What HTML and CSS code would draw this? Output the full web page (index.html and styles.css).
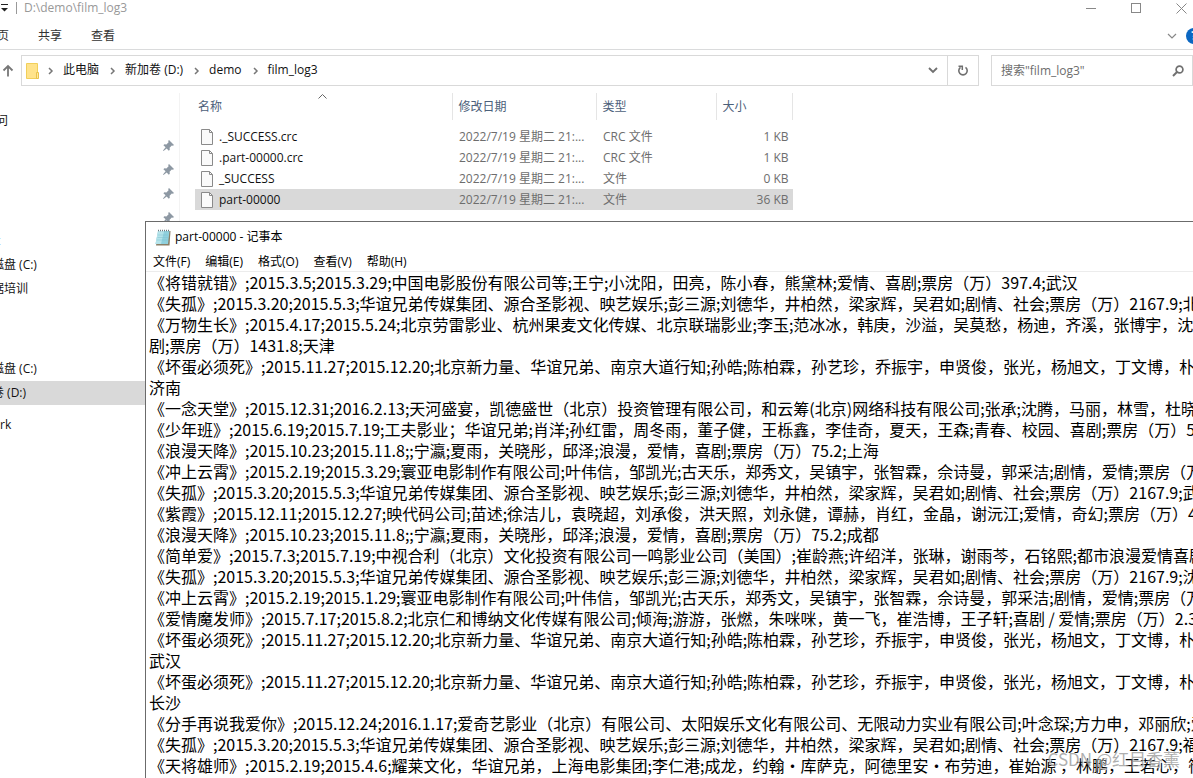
FILE: index.html
```html
<!DOCTYPE html>
<html lang="zh-CN">
<head>
<meta charset="utf-8">
<title>film_log3</title>
<link rel="stylesheet" href="styles.css">
</head>
<body>
<div class="desktop">
  <main class="explorer">
    <header class="titlebar">
      <svg class="quick" width="8" height="8" viewBox="0 0 8 8"><path d="M1 .5h7" stroke="#222"/><path d="M1 4h7L4.500 7.500z" fill="#222"/></svg>
      <span class="path">D:\demo\film_log3</span>
      <div class="window-buttons">
        <button aria-label="最小化"><svg width="10" height="10"><path d="M0 5.500h10" stroke="#888"/></svg></button>
        <button aria-label="最大化"><svg width="10" height="10"><rect x=".5" y=".5" width="9" height="9" fill="none" stroke="#888"/></svg></button>
        <button aria-label="关闭"><svg width="11" height="11"><path d="M.5.5l10 10M10.500.5l-10 10" stroke="#888"/></svg></button>
      </div>
    </header>
    <div class="ribbon">
      <button>页</button>
      <button>共享</button>
      <button>查看</button>
      <div class="ribbon-end">
        <button aria-label="展开功能区"><svg width="10" height="6"><path d="M1 1l4 4 4-4" fill="none" stroke="#888" stroke-width="1.200"/></svg></button>
        <button class="help" aria-label="帮助">?</button>
      </div>
    </div>
    <div class="address-row">
      <button class="up" aria-label="上移"><svg width="12" height="13"><path d="M6 12.500V2M1.500 6.500L6 2l4.500 4.500" fill="none" stroke="#777" stroke-width="1.800"/></svg></button>
      <div class="address">
        <svg class="folder" width="13" height="16"><path d="M.5.500h11v15H.5z" fill="#ffe38b" stroke="#f1cf5a"/><path d="M10.500 9.500h2v6h-2z" fill="#ffe99f" stroke="#e9c24b"/></svg>
        <svg class="sep" width="6" height="8"><path d="M1 1l3 3-3 3" fill="none" stroke="#777" stroke-width="1.500"/></svg>
        <a href="#">此电脑</a>
        <svg class="sep" width="6" height="8"><path d="M1 1l3 3-3 3" fill="none" stroke="#777" stroke-width="1.500"/></svg>
        <a href="#">新加卷 (D:)</a>
        <svg class="sep" width="6" height="8"><path d="M1 1l3 3-3 3" fill="none" stroke="#777" stroke-width="1.500"/></svg>
        <a href="#">demo</a>
        <svg class="sep" width="6" height="8"><path d="M1 1l3 3-3 3" fill="none" stroke="#777" stroke-width="1.500"/></svg>
        <a href="#">film_log3</a>
        <button class="history" aria-label="以前的位置"><svg width="10" height="7"><path d="M1 1l4 4 4-4" fill="none" stroke="#707070" stroke-width="1.800"/></svg></button>
        <button class="refresh" aria-label="刷新"><svg width="12" height="12"><path d="M8.500 2.300A4.200 4.200 0 1 1 3.500 2.300" fill="none" stroke="#707070" stroke-width="1.600"/><path d="M1.500 1.200h3.800V5" fill="none" stroke="#707070" stroke-width="1.500"/></svg></button>
      </div>
      <label class="search">
        <input type="text" aria-label="搜索" placeholder='搜索"film_log3"'>
        <svg width="12" height="12"><circle cx="7.500" cy="4.500" r="3.400" fill="none" stroke="#707070" stroke-width="1.700"/><path d="M5 7L1 11" stroke="#707070" stroke-width="2"/></svg>
      </label>
    </div>
    <div class="content">
      <nav class="sidebar">
        <a class="item root" href="#">问</a>
        <a class="item pinned" href="#" aria-label="固定项 1"><svg width="11" height="11" viewBox="0 0 11 11"><path d="M6 0l5 5-1 .8-1.200-.3-2.200 2.200.2 2-1 1L3.700 8.500.5 11 0 10.500l2.600-3.200L.4 5.200l1-1 2 .2 2.200-2.200L5.200 1z" fill="#8d98a3"/></svg></a>
        <a class="item pinned" href="#" aria-label="固定项 2"><svg width="11" height="11" viewBox="0 0 11 11"><path d="M6 0l5 5-1 .8-1.200-.3-2.200 2.200.2 2-1 1L3.700 8.500.5 11 0 10.500l2.600-3.200L.4 5.200l1-1 2 .2 2.200-2.200L5.200 1z" fill="#8d98a3"/></svg></a>
        <a class="item pinned" href="#" aria-label="固定项 3"><svg width="11" height="11" viewBox="0 0 11 11"><path d="M6 0l5 5-1 .8-1.200-.3-2.200 2.200.2 2-1 1L3.700 8.500.5 11 0 10.500l2.600-3.200L.4 5.200l1-1 2 .2 2.200-2.200L5.200 1z" fill="#8d98a3"/></svg></a>
        <a class="item pinned" href="#" aria-label="固定项 4"><svg width="11" height="11" viewBox="0 0 11 11"><path d="M6 0l5 5-1 .8-1.200-.3-2.200 2.200.2 2-1 1L3.700 8.500.5 11 0 10.500l2.600-3.200L.4 5.200l1-1 2 .2 2.200-2.200L5.200 1z" fill="#8d98a3"/></svg></a>
        <a class="item root" href="#">t</a>
        <a class="item" href="#">磁盘 (C:)</a>
        <a class="item" href="#">据培训</a>
        <a class="item drives" href="#">磁盘 (C:)</a>
        <a class="item selected" href="#">卷 (D:)</a>
        <a class="item network" href="#">rk</a>
      </nav>
      <section class="files">
        <svg class="sort" width="9" height="5"><path d="M.5 4.500l4-4 4 4" fill="none" stroke="#666"/></svg>
        <table>
          <thead>
            <tr><th class="name">名称</th><th class="date">修改日期</th><th class="type">类型</th><th class="size">大小</th></tr>
          </thead>
          <tbody>
            <tr><td><span class="file"><svg width="12" height="16"><path d="M.5.500h8l3 3v12H.5z" fill="#fafafa" stroke="#8a8a8a"/><path d="M8.500.5v3h3" fill="none" stroke="#8a8a8a"/></svg>._SUCCESS.crc</span></td><td>2022/7/19 星期二 21:...</td><td>CRC 文件</td><td class="num">1 KB</td></tr>
            <tr><td><span class="file"><svg width="12" height="16"><path d="M.5.500h8l3 3v12H.5z" fill="#fafafa" stroke="#8a8a8a"/><path d="M8.500.5v3h3" fill="none" stroke="#8a8a8a"/></svg>.part-00000.crc</span></td><td>2022/7/19 星期二 21:...</td><td>CRC 文件</td><td class="num">1 KB</td></tr>
            <tr><td><span class="file"><svg width="12" height="16"><path d="M.5.500h8l3 3v12H.5z" fill="#fafafa" stroke="#8a8a8a"/><path d="M8.500.5v3h3" fill="none" stroke="#8a8a8a"/></svg>_SUCCESS</span></td><td>2022/7/19 星期二 21:...</td><td>文件</td><td class="num">0 KB</td></tr>
            <tr class="selected"><td><span class="file"><svg width="12" height="16"><path d="M.5.500h8l3 3v12H.5z" fill="#fafafa" stroke="#8a8a8a"/><path d="M8.500.5v3h3" fill="none" stroke="#8a8a8a"/></svg>part-00000</span></td><td>2022/7/19 星期二 21:...</td><td>文件</td><td class="num">36 KB</td></tr>
          </tbody>
        </table>
      </section>
    </div>
  </main>

  <section class="notepad">
    <header class="notepad-title">
      <svg width="16" height="17" viewBox="0 0 16 17"><path d="M3.500 2h12l-1 14.500H1z" fill="#8a7e66"/><path d="M3 2h11.500l-1.500 13H.5z" fill="#8fd0dd"/><path d="M3 2h6l-3 13H.5z" fill="#b5e3ea"/><path d="M3 6h10M2.500 8.500h10.500M2 11h10.500" stroke="#7fc2d0" stroke-width=".5"/><path d="M3 1.500h12" stroke="#6b7a80" stroke-width="1.500" stroke-dasharray="1 1"/></svg>
      <span>part-00000 - 记事本</span>
    </header>
    <div class="menu">
      <button>文件(F)</button>
      <button>编辑(E)</button>
      <button>格式(O)</button>
      <button>查看(V)</button>
      <button>帮助(H)</button>
    </div>
    <textarea class="text" wrap="off" spellcheck="false" aria-label="文本编辑器">《将错就错》;2015.3.5;2015.3.29;中国电影股份有限公司等;王宁;小沈阳，田亮，陈小春，熊黛林;爱情、喜剧;票房（万）397.4;武汉
《失孤》;2015.3.20;2015.5.3;华谊兄弟传媒集团、源合圣影视、映艺娱乐;彭三源;刘德华，井柏然，梁家辉，吴君如;剧情、社会;票房（万）2167.9;北京
《万物生长》;2015.4.17;2015.5.24;北京劳雷影业、杭州果麦文化传媒、北京联瑞影业;李玉;范冰冰，韩庚，沙溢，吴莫愁，杨迪，齐溪，张博宇，沈梦辰
剧;票房（万）1431.8;天津
《坏蛋必须死》;2015.11.27;2015.12.20;北京新力量、华谊兄弟、南京大道行知;孙皓;陈柏霖，孙艺珍，乔振宇，申贤俊，张光，杨旭文，丁文博，朴
济南
《一念天堂》;2015.12.31;2016.2.13;天河盛宴，凯德盛世（北京）投资管理有限公司，和云筹(北京)网络科技有限公司;张承;沈腾，马丽，林雪，杜晓宇
《少年班》;2015.6.19;2015.7.19;工夫影业；华谊兄弟;肖洋;孙红雷，周冬雨，董子健，王栎鑫，李佳奇，夏天，王森;青春、校园、喜剧;票房（万）50
《浪漫天降》;2015.10.23;2015.11.8;;宁瀛;夏雨，关晓彤，邱泽;浪漫，爱情，喜剧;票房（万）75.2;上海
《冲上云霄》;2015.2.19;2015.3.29;寰亚电影制作有限公司;叶伟信，邹凯光;古天乐，郑秀文，吴镇宇，张智霖，佘诗曼，郭采洁;剧情，爱情;票房（万）
《失孤》;2015.3.20;2015.5.3;华谊兄弟传媒集团、源合圣影视、映艺娱乐;彭三源;刘德华，井柏然，梁家辉，吴君如;剧情、社会;票房（万）2167.9;武汉
《紫霞》;2015.12.11;2015.12.27;映代码公司;苗述;徐洁儿，袁晓超，刘承俊，洪天照，刘永健，谭赫，肖红，金晶，谢沅江;爱情，奇幻;票房（万）4
《浪漫天降》;2015.10.23;2015.11.8;;宁瀛;夏雨，关晓彤，邱泽;浪漫，爱情，喜剧;票房（万）75.2;成都
《简单爱》;2015.7.3;2015.7.19;中视合利（北京）文化投资有限公司一鸣影业公司（美国）;崔龄燕;许绍洋，张琳，谢雨芩，石铭熙;都市浪漫爱情喜剧
《失孤》;2015.3.20;2015.5.3;华谊兄弟传媒集团、源合圣影视、映艺娱乐;彭三源;刘德华，井柏然，梁家辉，吴君如;剧情、社会;票房（万）2167.9;沈阳
《冲上云霄》;2015.2.19;2015.1.29;寰亚电影制作有限公司;叶伟信，邹凯光;古天乐，郑秀文，吴镇宇，张智霖，佘诗曼，郭采洁;剧情，爱情;票房（万）
《爱情魔发师》;2015.7.17;2015.8.2;北京仁和博纳文化传媒有限公司;倾海;游游，张燃，朱咪咪，黄一飞，崔浩博，王子轩;喜剧 / 爱情;票房（万）2.3
《坏蛋必须死》;2015.11.27;2015.12.20;北京新力量、华谊兄弟、南京大道行知;孙皓;陈柏霖，孙艺珍，乔振宇，申贤俊，张光，杨旭文，丁文博，朴
武汉
《坏蛋必须死》;2015.11.27;2015.12.20;北京新力量、华谊兄弟、南京大道行知;孙皓;陈柏霖，孙艺珍，乔振宇，申贤俊，张光，杨旭文，丁文博，朴
长沙
《分手再说我爱你》;2015.12.24;2016.1.17;爱奇艺影业（北京）有限公司、太阳娱乐文化有限公司、无限动力实业有限公司;叶念琛;方力申，邓丽欣;爱情
《失孤》;2015.3.20;2015.5.3;华谊兄弟传媒集团、源合圣影视、映艺娱乐;彭三源;刘德华，井柏然，梁家辉，吴君如;剧情、社会;票房（万）2167.9;福州
《天将雄师》;2015.2.19;2015.4.6;耀莱文化，华谊兄弟，上海电影集团;李仁港;成龙，约翰&#x387;库萨克，阿德里安&#x387;布劳迪，崔始源 ，林鹏，王若心，筷子</textarea>
  </section>
  <div class="watermark">CSDN @红目香薰</div>
</div>
</body>
</html>
```

FILE: styles.css
```css
* { box-sizing: border-box; }

body {
  margin: 0;
  background: #fff;
  color: #111;
  font: 12px/16px "Open Sans", "Noto Sans CJK SC", sans-serif;
  overflow: hidden;
}

button {
  display: flex;
  align-items: center;
  padding: 0;
  border: 0;
  background: none;
  color: inherit;
  font: inherit;
}

a { color: inherit; text-decoration: none; }
svg { flex: none; display: block; }

.desktop { position: relative; height: 100vh; overflow: hidden; }

.titlebar { display: flex; align-items: center; height: 16px; padding-right: 6px; }
.quick { margin-right: 8px; }
.path { padding-left: 7px; border-left: 1px solid #999; color: #999; line-height: 12px; }
.window-buttons { display: flex; gap: 35px; margin-left: auto; }

.ribbon {
  display: flex;
  align-items: center;
  gap: 29px;
  height: 34px;
  padding-top: 6px;
  border-bottom: 1px solid #dadbdc;
  color: #333;
}
.ribbon > button:first-child { margin-left: -3px; }
.ribbon-end { display: flex; align-items: center; gap: 9px; margin: 0 -9px 0 auto; }
.help {
  justify-content: center;
  width: 16px;
  height: 16px;
  border-radius: 8px;
  background: #0b67c2;
  color: #fff;
  font-weight: bold;
}

.address-row { display: flex; height: 36px; padding-top: 5px; }
.up { width: 21px; padding-left: 2px; }
.address {
  display: flex;
  flex: 1;
  align-items: center;
  border: 1px solid #d9d9d9;
  margin-right: 12px;
}
.address a { padding-bottom: 2px; }
.folder { margin: 0 3px 0 4px; }
.sep { margin: 0 9px 0 11px; }
.sep:nth-child(2) { margin-left: 6px; }
.history { margin: 0 9px 0 auto; }
.refresh {
  justify-content: center;
  align-self: stretch;
  width: 31px;
  border-left: 1px solid #d9d9d9;
}
.search {
  display: flex;
  align-items: center;
  width: 202px;
  padding: 0 8px 0 9px;
  border: 1px solid #d9d9d9;
}
.search input { flex: 1; min-width: 0; padding: 0; border: 0; outline: 0; font: inherit; }
.search input::placeholder { color: #6d6d6d; opacity: 1; }

.content { display: flex; }
.sidebar {
  flex: none;
  width: 188px;
  margin: 7px 0 0 -8px;
  padding-top: 16px;
  border-right: 1px solid #f3f3f3;
}
.item { display: flex; align-items: center; height: 24px; white-space: nowrap; }
.item.root { padding-left: 4px; }
.item.pinned { justify-content: flex-end; padding-right: 5px; }
.item.drives { margin-top: 56px; }
.item.network { margin-top: 8px; padding-left: 8px; }
.item.selected, .files .selected { background: #d9d9d9; }

.files { position: relative; margin: 7px 0 0 15px; }
.sort { position: absolute; left: 123px; top: 1px; }
table { border-collapse: collapse; table-layout: fixed; width: 598px; }
th {
  height: 27px;
  padding: 0 6px;
  border-right: 1px solid #e5e5e5;
  color: #4c607a;
  font-weight: normal;
  text-align: left;
}
th.name { width: 257px; padding-left: 3px; }
th.date { width: 144px; }
th.type { width: 120px; }
td { height: 21px; padding: 0 7px; color: #6d6d6d; white-space: nowrap; }
tbody::before { content: ""; display: block; height: 6px; }
td:first-child { padding-left: 6px; color: #111; }
.file { display: flex; align-items: center; gap: 6px; }
td.num { padding-right: 4px; text-align: right; }

.notepad {
  position: absolute;
  inset: 221px 0 0 145px;
  display: flex;
  flex-direction: column;
  border: 1px solid #6b6b6b;
  border-width: 1px 0 0 1px;
  background: #fff;
  color: #000;
}
.notepad-title { display: flex; align-items: center; gap: 4px; height: 30px; padding-left: 9px; }
.menu {
  display: flex;
  gap: 15px;
  height: 20px;
  padding-left: 7px;
  border-bottom: 1px solid #ececec;
}
.text {
  flex: 1;
  margin: 0;
  padding: 0 0 0 3px;
  border: 0;
  outline: 0;
  resize: none;
  overflow: hidden;
  color: #000;
  font: 16px/21px "Noto Sans CJK SC", "Open Sans", sans-serif;
  font-kerning: none;
  text-spacing-trim: space-all;
}

.watermark {
  position: absolute;
  right: 13px;
  bottom: 7px;
  color: rgba(140, 140, 140, 0.7);
  font: 17px/24px "Noto Sans CJK SC", sans-serif;
  text-shadow: 1px 1px 1px rgba(255, 255, 255, 0.8);
}
```
